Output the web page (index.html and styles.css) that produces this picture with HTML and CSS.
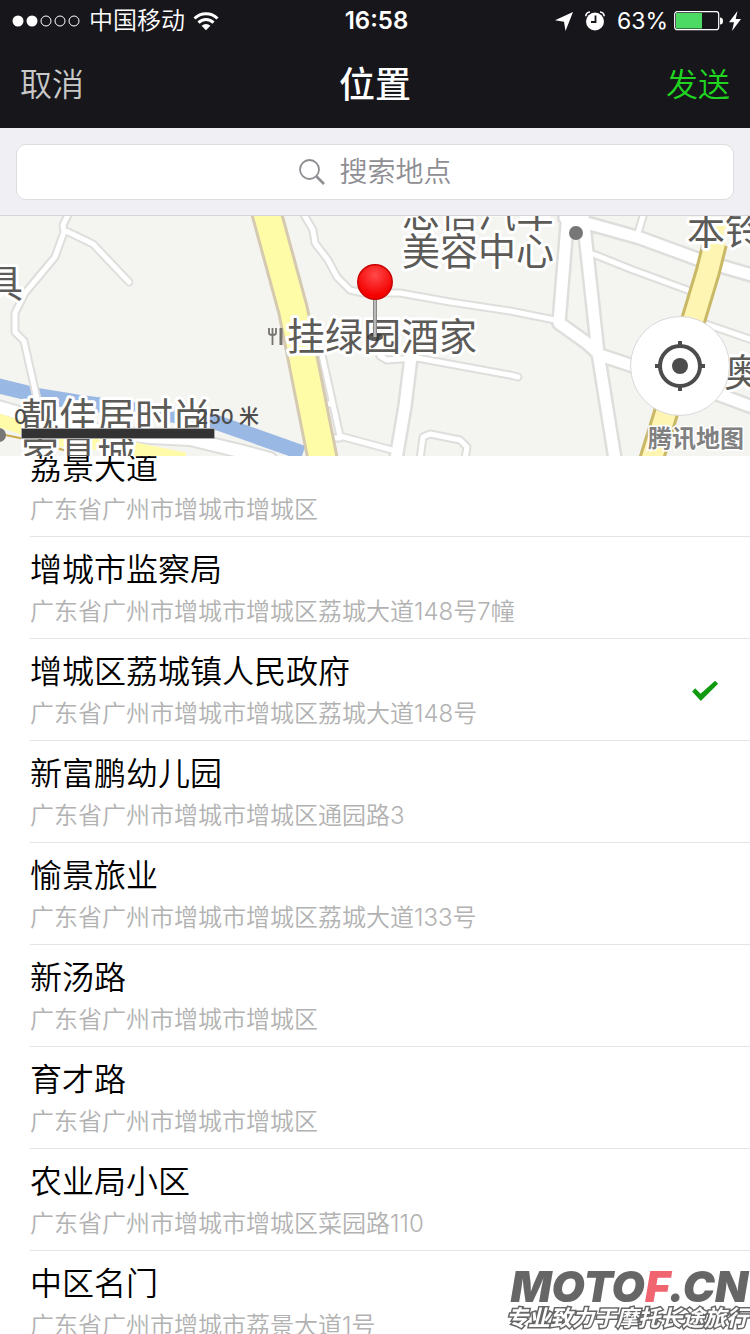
FILE: index.html
```
<!DOCTYPE html>
<html lang="zh-CN">
<head>
    <meta charset="UTF-8">
    <meta name="viewport" content="width=device-width, initial-scale=1.0">
    <title>位置</title>
    <link rel="stylesheet" href="styles.css">
</head>
<body>
    <header class="header">
        <div class="status">
            <div class="status-left">
                <svg class="signal" width="68" height="12" viewBox="0 0 68 12">
                    <g fill="#fff"><circle cx="6" cy="6" r="5.5"/><circle cx="20" cy="6" r="5.5"/></g>
                    <g fill="none" stroke="#fff"><circle cx="34" cy="6" r="5"/><circle cx="48" cy="6" r="5"/><circle cx="62" cy="6" r="5"/></g>
                </svg>
                <span class="carrier">中国移动</span>
                <svg width="26" height="20" viewBox="0 0 26 20">
                    <g fill="none" stroke="#fff" stroke-width="3">
                        <path d="M1.5 7.5a16.2 16.2 0 0 1 23 0"/>
                        <path d="M5.5 11.6a10.6 10.6 0 0 1 15 0"/>
                    </g>
                    <path d="M8.6 14.8a6.2 6.2 0 0 1 8.8 0L13 19.2z" fill="#fff"/>
                </svg>
            </div>
            <div class="time">16:58</div>
            <div class="status-right">
                <svg width="18" height="19" viewBox="0 0 18 19"><path d="M18 0L10.5 19L9 9.7L0 8.3z" fill="#fff"/></svg>
                <svg class="alarm" width="20" height="20" viewBox="0 0 20 20">
                    <circle cx="10" cy="10.5" r="9" fill="#fff"/>
                    <path d="M.8 5.2Q1 1.3 5 1M19.2 5.2Q19 1.3 15 1" fill="none" stroke="#fff" stroke-width="1.6"/>
                    <path d="M10.5 4.5v6.500H6" fill="none" stroke="#17161b" stroke-width="1.8"/>
                </svg>
                <span class="percent">63%</span>
                <svg width="49" height="20" viewBox="0 0 49 20">
                    <rect x=".7" y=".7" width="44" height="18" rx="2.500" fill="none" stroke="#fff" stroke-width="1.200"/>
                    <rect x="2" y="2" width="26" height="15.500" fill="#4cd964"/>
                    <path d="M46 6.500q3 0 3 3.500t-3 3.500z" fill="#fff"/>
                </svg>
                <svg class="bolt" width="12" height="20" viewBox="0 0 12 20"><path d="M8.500 0L0 11.300H5L3 20L12 8H6.700z" fill="#fff"/></svg>
            </div>
        </div>
        <nav class="nav">
            <button class="nav-btn" type="button">取消</button>
            <h1 class="nav-title">位置</h1>
            <button class="nav-btn send" type="button">发送</button>
        </nav>
    </header>

    <div class="search">
        <label class="search-box">
            <svg width="26" height="26" viewBox="0 0 26 26" fill="none" stroke="#8e8e93">
                <circle cx="10.500" cy="10.500" r="9.500" stroke-width="1.800"/>
                <path d="M17.500 17.500L25 25" stroke-width="2.600"/>
            </svg>
            <input class="search-input" type="text" placeholder="搜索地点" aria-label="搜索地点">
        </label>
    </div>

    <div class="map">
        <svg class="map-canvas" viewBox="0 0 750 240" preserveAspectRatio="xMidYMid slice">
            <rect width="750" height="240" fill="#f4f4f0"/>

            <!-- river -->
            <path class="river" d="M-5 169L40 180L77 186L167 198L218 207L303 237"/>

            <!-- side roads -->
            <g class="case">
                <path stroke-width="9" d="M69 -3L63 9L64 16L55 41L25 77L15 97L15 116L24 125L37 183M64 14L93 28L129 66M303 -3L313 14L315 27L328 44L337 61L350 74L363 77H400L450 86L510 95L555 104M380 140L387 144L417 142L510 159L518 161M322 139L340 220L392 234M420 243L423 221L430 218L460 224L467 231L465 243M593 38L633 54L693 76M644 -3L638 17M703 107L755 125M324 188H332M333 222H340"/>
                <path stroke-width="16" d="M411 141L405 190L396 243M568 -3L559 107L587 127L600 139L630 149L720 179L755 192M583 0L598 137L615 243M565 2L590 8L640 22L700 44L755 60"/>
                <path stroke-width="16" d="M-5 190L60 209L150 221L190 223L240 235L270 243"/>
            </g>
            <g class="road">
                <path stroke-width="5" d="M69 -3L63 9L64 16L55 41L25 77L15 97L15 116L24 125L37 183M64 14L93 28L129 66M303 -3L313 14L315 27L328 44L337 61L350 74L363 77H400L450 86L510 95L555 104M380 140L387 144L417 142L510 159L518 161M322 139L340 220L392 234M420 243L423 221L430 218L460 224L467 231L465 243M593 38L633 54L693 76M644 -3L638 17M703 107L755 125M324 188H332M333 222H340"/>
                <path stroke-width="11" d="M411 141L405 190L396 243M568 -3L559 107L587 127L600 139L630 149L720 179L755 192M583 0L598 137L615 243M565 2L590 8L640 22L700 44L755 60"/>
                <path stroke-width="12" d="M-5 190L60 209L150 221L190 223L240 235L270 243"/>
            </g>

            <!-- main roads -->
            <g fill="none">
                <path stroke="#d5cab0" stroke-width="32" d="M266 -5L293 94L323 245"/>
                <path stroke="#fffca8" stroke-width="26" d="M266 -5L293 94L323 245"/>
                <path stroke="#c9b866" stroke-width="26" d="M715 27L708 55L693 105L665 200L651 245"/>
                <path stroke="#fff5b2" stroke-width="20" d="M717 8L715 27L708 55L693 105L665 200L651 245"/>
                <path stroke="#fffba8" stroke-width="13" d="M-5 203L60 224L120 230L185 243"/>
                <path stroke="#c9a94b" stroke-width="2" d="M-5 217L30 224L70 236"/>
            </g>

            <circle cx="576" cy="17" r="7" fill="#777"/>
            <circle cx="-1" cy="219" r="7" fill="#777"/>
            <g stroke="#77736d" fill="none" stroke-width="1.800">
                <path d="M269 112v5q0 2 3.500 2t3.500-2v-5M272.500 112v17"/>
                <path d="M281 112v17" stroke-width="3"/>
            </g>
            <g class="poi">
                <text x="-15" y="81">具</text>
                <text x="402" y="11">忠信汽车</text>
                <text x="402" y="49">美容中心</text>
                <text x="687" y="28">本铃</text>
                <text x="287" y="134">挂绿园酒家</text>
                <text x="724" y="170">奥</text>
                <text x="21" y="214">靓佳居时尚</text>
                <text x="21" y="252">家具城</text>
            </g>
        </svg>

        <svg class="pin" width="36" height="78" viewBox="0 0 36 78">
            <defs>
                <radialGradient id="pinFill" cx=".5" cy=".3" r=".6">
                    <stop offset="0" stop-color="#ff4a4a"/>
                    <stop offset="1" stop-color="#f40000"/>
                </radialGradient>
            </defs>
            <ellipse cx="18" cy="73" rx="8" ry="4" fill="#333" opacity=".8"/>
            <path d="M18 34v39" stroke="#888" stroke-width="4"/>
            <path d="M18 34v39" stroke="#b9b9b9" stroke-width="2"/>
            <circle cx="18" cy="18" r="17.200" fill="url(#pinFill)" stroke="#c80000" stroke-width="1.500"/>
        </svg>

        <div class="scale">
            <div class="scale-text"><span>0</span><span>250 米</span></div>
            <div class="scale-bar"></div>
        </div>

        <button class="locate" type="button" aria-label="定位">
            <svg width="50" height="50" viewBox="0 0 50 50">
                <circle cx="25" cy="25" r="20" fill="none" stroke="#4c4c4c" stroke-width="4"/>
                <circle cx="25" cy="25" r="8" fill="#4c4c4c"/>
                <path d="M25 0v5M25 45v5M0 25h5M45 25h5" stroke="#4c4c4c" stroke-width="4"/>
            </svg>
        </button>
        <div class="map-brand">腾讯地图</div>
    </div>

    <main class="list">
        <label class="place">
            <span class="place-text"><span class="name">荔景大道</span><span class="address">广东省广州市增城市增城区</span></span>
            <input class="check" type="radio" name="place">
        </label>
        <label class="place">
            <span class="place-text"><span class="name">增城市监察局</span><span class="address">广东省广州市增城市增城区荔城大道148号7幢</span></span>
            <input class="check" type="radio" name="place">
        </label>
        <label class="place">
            <span class="place-text"><span class="name">增城区荔城镇人民政府</span><span class="address">广东省广州市增城市增城区荔城大道148号</span></span>
            <input class="check" type="radio" name="place" checked>
        </label>
        <label class="place">
            <span class="place-text"><span class="name">新富鹏幼儿园</span><span class="address">广东省广州市增城市增城区通园路3</span></span>
            <input class="check" type="radio" name="place">
        </label>
        <label class="place">
            <span class="place-text"><span class="name">愉景旅业</span><span class="address">广东省广州市增城市增城区荔城大道133号</span></span>
            <input class="check" type="radio" name="place">
        </label>
        <label class="place">
            <span class="place-text"><span class="name">新汤路</span><span class="address">广东省广州市增城市增城区</span></span>
            <input class="check" type="radio" name="place">
        </label>
        <label class="place">
            <span class="place-text"><span class="name">育才路</span><span class="address">广东省广州市增城市增城区</span></span>
            <input class="check" type="radio" name="place">
        </label>
        <label class="place">
            <span class="place-text"><span class="name">农业局小区</span><span class="address">广东省广州市增城市增城区菜园路110</span></span>
            <input class="check" type="radio" name="place">
        </label>
        <label class="place">
            <span class="place-text"><span class="name">中区名门</span><span class="address">广东省广州市增城市荔景大道1号</span></span>
            <input class="check" type="radio" name="place">
        </label>
    </main>

    <div class="watermark">
        <div class="wm-name">MOTO<span class="wm-red">F</span>.CN</div>
        <div class="wm-slogan">专业致力于摩托长途旅行</div>
    </div>
</body>
</html>
```

FILE: styles.css
```
* {
    box-sizing: border-box;
}
body {
    margin: 0;
    height: 100vh;
    display: flex;
    flex-direction: column;
    overflow: hidden;
    background: #fff;
    color: #000;
    font-family: Inter, "Noto Sans CJK SC", sans-serif;
}
button {
    border: 0;
    padding: 0;
    background: none;
    font-family: inherit;
    cursor: pointer;
}
svg {
    display: block;
    flex: none;
}

/* header */
.header {
    background: #17161b;
    color: #fff;
}
.status {
    display: grid;
    grid-template-columns: 1fr auto 1fr;
    align-items: center;
    height: 42px;
    padding: 0 9px 0 12px;
    font-size: 24px;
    line-height: 42px;
}
.status-left, .status-right {
    display: flex;
    align-items: center;
}
.signal {
    margin-right: 9px;
}
.carrier {
    margin-right: 8px;
    font-weight: 350;
}
.time {
    font-weight: 600;
}
.status-right {
    justify-content: flex-end;
}
.alarm {
    margin: 0 12px;
}
.percent {
    margin-right: 6px;
    font-size: 23px;
}
.bolt {
    margin-left: 6px;
}
.nav {
    display: grid;
    grid-template-columns: 1fr auto 1fr;
    align-items: center;
    height: 86px;
    padding: 0 20px;
}
.nav-btn {
    justify-self: start;
    color: #c8c8c8;
    font-size: 32px;
    font-weight: 350;
    line-height: 86px;
}
.nav-title {
    margin: 0;
    font-size: 36px;
    font-weight: 500;
    line-height: 86px;
}
.send {
    justify-self: end;
    color: #1fd51f;
}

/* search */
.search {
    padding: 16px 16px 15px;
    background: #efeff4;
    border-bottom: 1px solid #d5d4dc;
}
.search-box {
    display: flex;
    align-items: center;
    justify-content: center;
    gap: 15px;
    height: 56px;
    background: #fff;
    border: 1px solid #dddde1;
    border-radius: 10px;
}
.search-input {
    width: 112px;
    height: 52px;
    padding: 0;
    border: 0;
    outline: 0;
    background: none;
    font-family: inherit;
    font-size: 28px;
    font-weight: 350;
}
.search-input::placeholder {
    color: #8e8e93;
}

/* map */
.map {
    position: relative;
    flex: none;
    height: 240px;
    overflow: hidden;
}
.map-canvas {
    width: 100%;
    height: 100%;
}
.river {
    fill: none;
    stroke: #9ab8e4;
    stroke-width: 15px;
}
.case, .road {
    fill: none;
    stroke-linecap: round;
    stroke-linejoin: round;
}
.case {
    stroke: #dededc;
}
.road {
    stroke: #fff;
}
.poi {
    font-size: 38px;
    fill: #5c5b58;
    stroke: #fff;
    stroke-width: 6px;
    stroke-linejoin: round;
    paint-order: stroke;
}
.pin {
    position: absolute;
    top: 48px;
    left: 50%;
    margin-left: -18px;
}
.scale {
    position: absolute;
    left: 14px;
    bottom: 17px;
    width: 245px;
    color: #4c4c4c;
    font-size: 20px;
    font-weight: 500;
    line-height: 22px;
}
.scale-text {
    display: flex;
    justify-content: space-between;
}
.scale-bar {
    width: 194px;
    height: 11px;
    margin-left: 7px;
    background: #333;
    border: 1px solid #aaa;
}
.locate {
    position: absolute;
    right: 20px;
    bottom: 40px;
    display: flex;
    align-items: center;
    justify-content: center;
    width: 100px;
    height: 100px;
    background: #fff;
    border: 1px solid #d8d8d8;
    border-radius: 50%;
}
.map-brand {
    position: absolute;
    right: 6px;
    bottom: 3px;
    color: #808080;
    font-size: 24px;
    font-weight: 700;
    line-height: 28px;
    -webkit-text-stroke: 3px #fff;
    paint-order: stroke;
}

/* places */
.list {
    flex: 1;
    min-height: 0;
    overflow: hidden;
}
.place {
    display: flex;
    align-items: center;
    justify-content: space-between;
    margin-left: 30px;
    padding: 13px 31px 10px 0;
    border-bottom: 1px solid #e4e4e4;
}
.place:first-child {
    margin-top: -21px;
}
.place-text {
    display: flex;
    flex-direction: column;
    gap: 6px;
}
.name {
    font-size: 32px;
    font-weight: 350;
    line-height: 40px;
}
.address {
    color: #b2b2b2;
    font-size: 24px;
    font-weight: 350;
    line-height: 32px;
}
.check {
    appearance: none;
    width: 28px;
    height: 22px;
    margin: 0;
}
.check:checked {
    background: #109a10;
    clip-path: polygon(4% 52%, 15% 38%, 34% 62%, 86% 3%, 97% 17%, 35% 96%);
}

/* watermark */
.watermark {
    position: fixed;
    right: 2px;
    bottom: 4px;
    text-align: right;
    pointer-events: none;
}
.wm-name {
    color: #666;
    font-size: 43px;
    font-style: italic;
    font-weight: 900;
    line-height: 40px;
}
.wm-red {
    color: #f06570;
}
.wm-slogan {
    color: #fff;
    font-size: 22px;
    font-style: italic;
    font-weight: 700;
    line-height: 24px;
    -webkit-text-stroke: 3px #666;
    paint-order: stroke;
}
```
